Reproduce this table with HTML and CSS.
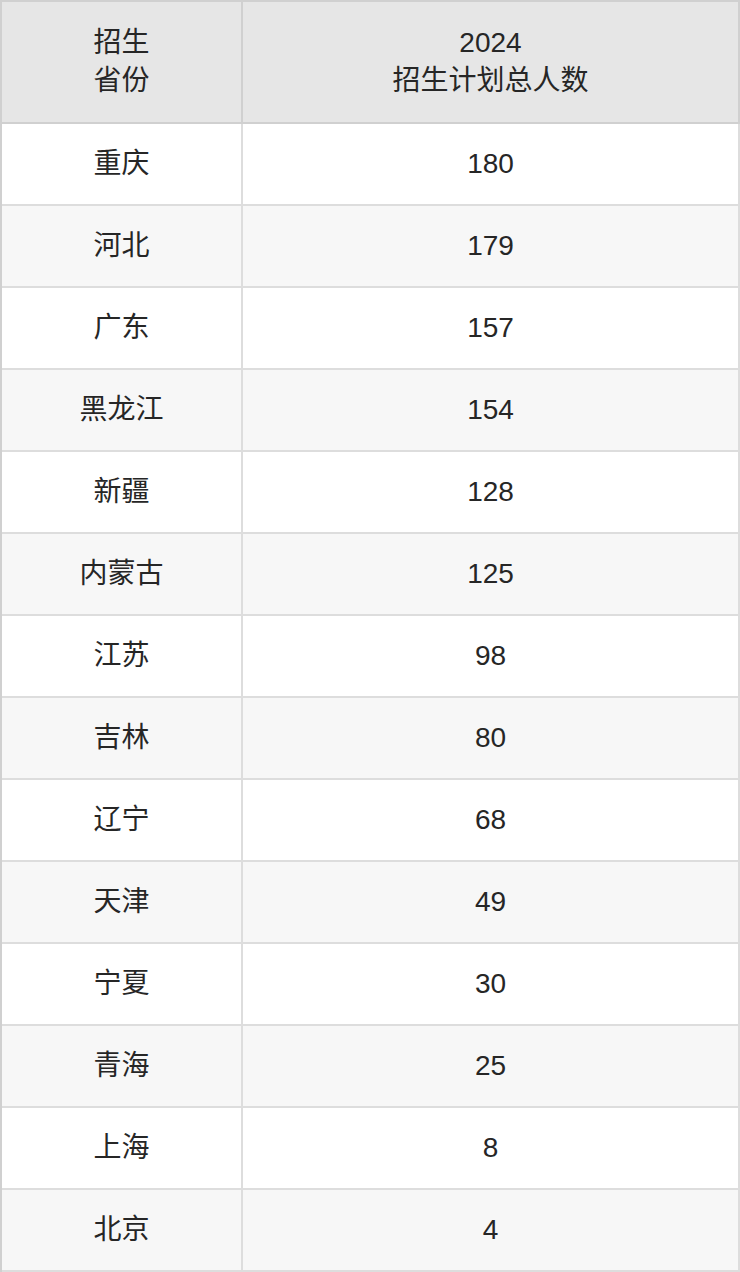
FILE: index.html
```html
<!DOCTYPE html>
<html lang="zh">
<head>
<meta charset="utf-8">
<link rel="stylesheet" href="styles.css">
</head>
<body>
<table class="plan">
  <colgroup><col class="c1"><col class="c2"></colgroup>
  <thead>
    <tr><th>招生<br>省份</th><th>2024<br>招生计划总人数</th></tr>
  </thead>
  <tbody>
    <tr><td>重庆</td><td>180</td></tr>
    <tr><td>河北</td><td>179</td></tr>
    <tr><td>广东</td><td>157</td></tr>
    <tr><td>黑龙江</td><td>154</td></tr>
    <tr><td>新疆</td><td>128</td></tr>
    <tr><td>内蒙古</td><td>125</td></tr>
    <tr><td>江苏</td><td>98</td></tr>
    <tr><td>吉林</td><td>80</td></tr>
    <tr><td>辽宁</td><td>68</td></tr>
    <tr><td>天津</td><td>49</td></tr>
    <tr><td>宁夏</td><td>30</td></tr>
    <tr><td>青海</td><td>25</td></tr>
    <tr><td>上海</td><td>8</td></tr>
    <tr><td>北京</td><td>4</td></tr>
  </tbody>
</table>
</body>
</html>
```

FILE: styles.css
```css
html, body {
  margin: 0;
  padding: 0;
  background: #ffffff;
}
.plan {
  width: 740px;
  table-layout: fixed;
  border-collapse: separate;
  border-spacing: 0;
  border-top: 2px solid #d0d0d0;
  border-left: 2px solid #d0d0d0;
  font-family: "Liberation Sans", "Noto Sans CJK SC", sans-serif;
  font-size: 28px;
  line-height: 38px;
  color: #262626;
}
.c1 { width: 241px; }
.c2 { width: 497px; }
.plan th,
.plan td {
  padding: 0;
  text-align: center;
  vertical-align: middle;
  border-right: 2px solid #dddddd;
  border-bottom: 2px solid #dddddd;
  font-weight: normal;
  box-sizing: border-box;
}
.plan th {
  height: 122px;
  background: #e6e6e6;
  border-right-color: #d0d0d0;
  border-bottom-color: #d0d0d0;
}
.plan td {
  height: 82px;
}
.plan tbody tr:nth-child(odd) td { background: #ffffff; }
.plan tbody tr:nth-child(even) td { background: #f7f7f7; }
```
